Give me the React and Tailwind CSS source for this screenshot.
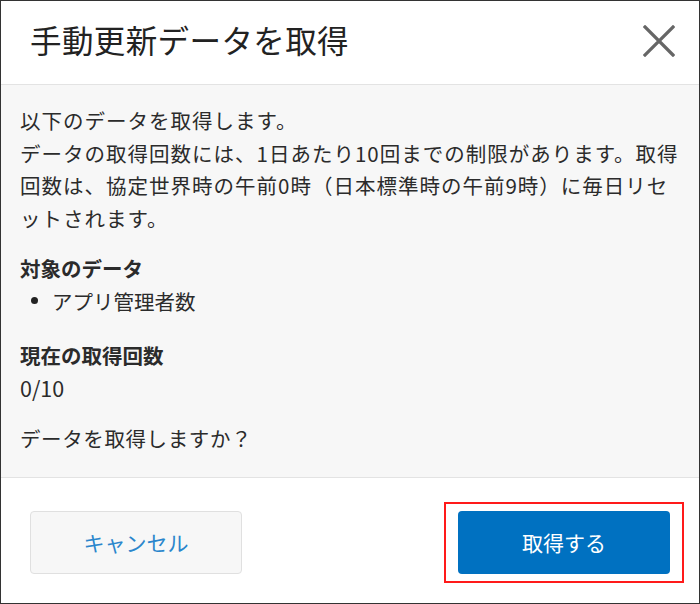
const jp = { fontFamily: '"Noto Sans CJK JP", "Noto Sans", sans-serif' };

function CloseIcon() {
  return (
    <svg width="32" height="32" viewBox="0 0 32 32" fill="none">
      <path d="M2 2 L30 30 M30 2 L2 30" stroke="#666" strokeWidth="3.2" strokeLinecap="square" />
    </svg>
  );
}

export default function App() {
  const intro = [
    '以下のデータを取得します。',
    'データの取得回数には、1日あたり10回までの制限があります。取得',
    '回数は、協定世界時の午前0時（日本標準時の午前9時）に毎日リセ',
    'ットされます。',
  ];

  return (
    <div style={jp} className="w-[700px] h-[604px] border border-[#333] bg-white flex flex-col text-[#2b2b2b]">
      {/* header */}
      <div className="h-[84px] shrink-0 border-b border-[#e3e3e3] flex items-center justify-between pl-[29px] pr-[24px]">
        <h1 className="text-[31.5px] leading-none tracking-[0.4px] pb-[6px] text-[#222]">手動更新データを取得</h1>
        <button className="w-[32px] h-[32px] flex items-center justify-center mb-[4px]">
          <CloseIcon />
        </button>
      </div>

      {/* body */}
      <div className="h-[392px] shrink-0 bg-[#f7f7f7] pt-[19px] pl-[19px] text-[20.5px] leading-[32.5px]">
        <div>
          {intro.map(line => (
            <div key={line} className="whitespace-nowrap tracking-[1px]">{line}</div>
          ))}
        </div>

        <div className="mt-[18px] font-bold">対象のデータ</div>
        <ul className="flex items-center">
          <li className="flex items-center">
            <span className="w-[7px] h-[7px] rounded-full bg-[#222] ml-[11px] mr-[14px]" />
            アプリ管理者数
          </li>
        </ul>

        <div className="mt-[22px] font-bold">現在の取得回数</div>
        <div className="text-[21.5px]">0/10</div>

        <div className="mt-[18px] tracking-[0.6px]">データを取得しますか？</div>
      </div>

      {/* footer */}
      <div className="flex-1 border-t border-[#e3e3e3] flex items-start justify-between pl-[29px] pr-[15px]">
        <button className="mt-[33px] w-[212px] h-[63px] rounded-[4px] border border-[#e0e0e0] bg-[#f7f7f7] text-[#2a86cc] text-[21px]">
          キャンセル
        </button>
        <div className="mt-[24px] border-2 border-[#ff1a1a] pt-[7px] pb-[7px] pl-[12px] pr-[12px]">
          <button className="w-[212px] h-[63px] rounded-[4px] bg-[#0071c1] text-white text-[21px]">
            取得する
          </button>
        </div>
      </div>
    </div>
  );
}
